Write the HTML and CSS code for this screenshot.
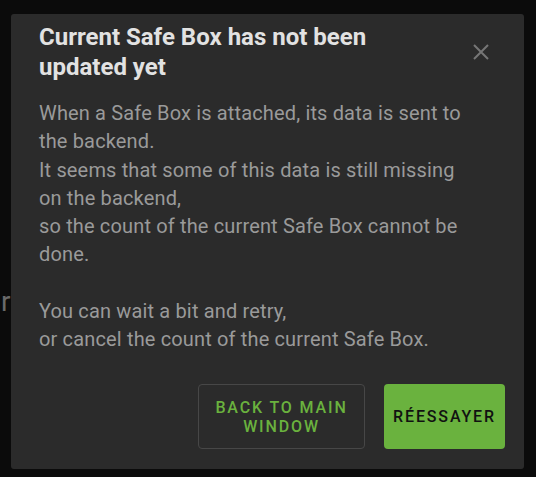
FILE: index.html
```html
<!DOCTYPE html>
<html lang="en">
<head>
<meta charset="utf-8">
<title>Safe Box</title>
<link rel="stylesheet" href="styles.css">
</head>
<body>
<div class="backdrop">
  <span class="behind-text">r</span>
</div>
<div class="dialog" role="dialog">
  <div class="dialog-header">
    <h2 class="dialog-title">Current Safe Box has not been updated yet</h2>
    <button class="close-btn" aria-label="Close">
      <svg width="16" height="16" viewBox="0 0 16 16"><path d="M1 1L15 15M15 1L1 15" stroke="#767676" stroke-width="2" fill="none"/></svg>
    </button>
  </div>
  <div class="dialog-body">
    <p>When a Safe Box is attached, its data is sent to the backend.<br>
    It seems that some of this data is still missing on the backend,<br>
    so the count of the current Safe Box cannot be done.<br>
    <br>
    You can wait a bit and retry,<br>
    or cancel the count of the current Safe Box.</p>
  </div>
  <div class="dialog-actions">
    <button class="btn btn-outline">Back to main window</button>
    <button class="btn btn-primary">Réessayer</button>
  </div>
</div>
</body>
</html>
```

FILE: styles.css
```css
html, body {
  margin: 0;
  padding: 0;
  width: 536px;
  height: 477px;
  background: #0b0b0b;
  overflow: hidden;
  font-family: Roboto, "Noto Sans", sans-serif;
}

.backdrop {
  position: absolute;
  inset: 0;
  background: #0b0b0b;
}

.behind-text {
  position: absolute;
  left: 1px;
  top: 286px;
  font-size: 28px;
  line-height: 32px;
  color: #6a6a6a;
}

.dialog {
  position: absolute;
  left: 11px;
  top: 14px;
  width: 513px;
  height: 455px;
  box-sizing: border-box;
  background: #2b2b2b;
  border-radius: 3px;
  padding: 8px 19px 20px 28px;
  display: flex;
  flex-direction: column;
}

.dialog-header {
  display: flex;
  align-items: flex-start;
  justify-content: space-between;
}

.dialog-title {
  margin: 0;
  width: 380px;
  font-size: 24px;
  line-height: 30px;
  font-weight: 700;
  color: #e2e2e2;
}

.close-btn {
  background: none;
  border: 0;
  padding: 0;
  margin: 22px 16px 0 0;
  width: 16px;
  height: 16px;
  display: flex;
}

.dialog-body {
  margin-top: 17px;
}

.dialog-body p {
  margin: 0;
  font-size: 20px;
  line-height: 28.3px;
  letter-spacing: 0.15px;
  color: #9a9a9a;
  width: 436px;
}

.dialog-actions {
  margin-top: auto;
  display: flex;
  justify-content: flex-end;
  gap: 19px;
}

.btn {
  height: 65px;
  box-sizing: border-box;
  border-radius: 4px;
  font-family: Roboto, sans-serif;
  font-size: 16px;
  font-weight: 500;
  line-height: 19px;
  letter-spacing: 1.86px;
  text-transform: uppercase;
  cursor: pointer;
}

.btn-outline {
  width: 167px;
  background: transparent;
  border: 1px solid #474747;
  color: #6ab23e;
  padding: 0 12px;
}

.btn-primary {
  width: 121px;
  background: #6ab23e;
  border: 0;
  color: #111;
  padding: 0;
}
```
